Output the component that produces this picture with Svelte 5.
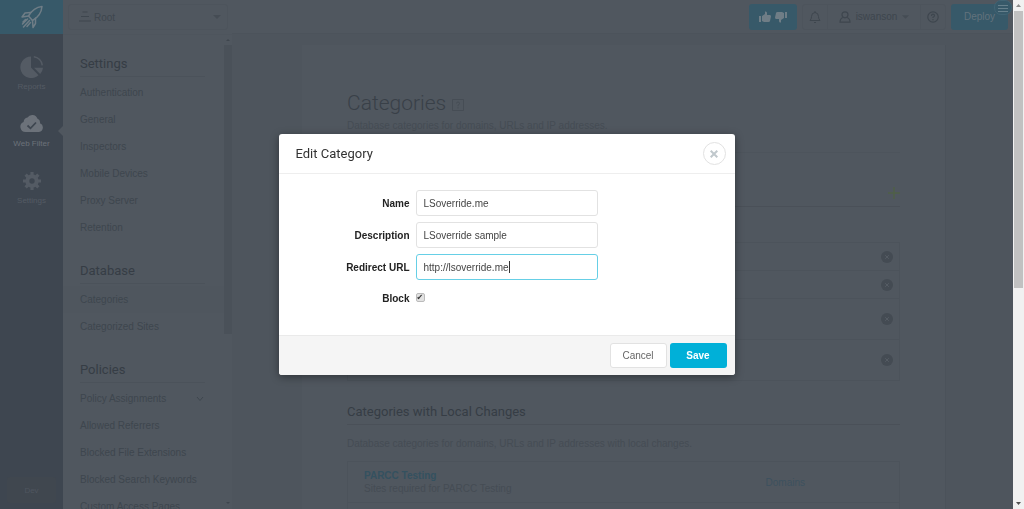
<script>
  import { onMount } from 'svelte';

  let name = 'LSoverride.me';
  let description = 'LSoverride sample';
  let redirectUrl = 'http://lsoverride.me';
  let block = true;
  let urlInput;

  const groups = [
    {
      title: 'Settings',
      items: ['Authentication', 'General', 'Inspectors', 'Mobile Devices', 'Proxy Server', 'Retention']
    },
    { title: 'Database', items: ['Categories', 'Categorized Sites'] },
    {
      title: 'Policies',
      items: [
        'Policy Assignments',
        'Allowed Referrers',
        'Blocked File Extensions',
        'Blocked Search Keywords',
        'Custom Access Pages'
      ]
    }
  ];

  const rows = ['short', 'short', 'tall', 'tall'];

  onMount(() => {
    urlInput.focus();
  });
</script>

<div class="page">
  <nav class="rail">
    <a class="logo" href="#home" aria-label="Home">
      <svg width="24" height="24" viewBox="0 0 24 24" fill="none" stroke="currentColor" stroke-width="1.5" stroke-linejoin="round" stroke-linecap="round">
        <path d="M22 1.500C17 2 12 5 8.500 11L12.500 15.500C18 12.500 21.500 7 22 1.500Z" />
        <path d="M11 7.500L5 8L2 12L8.500 11M15.500 13L15.500 18.500L13 22.500L12.500 15.500" />
        <path d="M7.500 14L2.500 19M9.500 15.500L3.500 22M10.500 17.500L7 21.500M5.500 14.500L3 17" />
      </svg>
    </a>
    <a class="rail-item" href="#reports">
      <svg width="24" height="24" viewBox="0 0 24 24">
        <path fill="currentColor" d="M11 1.500A10.800 10.800 0 1 0 18.500 20.200L11 12.500Z" />
        <path fill="currentColor" d="M14 12.800L23 12.800A10.500 10.500 0 0 1 20.200 19Z" />
        <path fill="none" stroke="currentColor" stroke-width="1.500" d="M13.800 1.800A9.500 9.500 0 0 1 22.300 10.300" />
      </svg>
      <span>Reports</span>
    </a>
    <a class="rail-item active" href="#filter">
      <svg width="24" height="24" viewBox="0 0 24 24">
        <path fill="currentColor" d="M5.500 20A5.200 5.200 0 0 1 3.600 10A5 5 0 0 1 7.500 5.500A5.500 5.500 0 0 1 17.300 6.500A4.300 4.300 0 0 1 20 11.200A4.600 4.600 0 0 1 19 20Z" />
        <path fill="none" stroke="#3e4650" stroke-width="1.800" d="M7.500 13.500L10.500 16.300L16 10.500" />
      </svg>
      <span>Web Filter</span>
    </a>
    <a class="rail-item" href="#settings">
      <svg width="24" height="24" viewBox="0 0 24 24">
        <circle cx="12" cy="12" r="4.700" fill="none" stroke="currentColor" stroke-width="4" />
        <g stroke="currentColor" stroke-width="3.200">
          <path d="M12 3V6M12 18V21M3 12H6M18 12H21M5.600 5.600L8 8M16 16L18.400 18.400M5.600 18.400L8 16M16 8L18.400 5.600" />
        </g>
      </svg>
      <span>Settings</span>
    </a>
    <button class="env">Dev</button>
  </nav>

  <aside class="subnav">
    <div class="subnav-top">
      <button class="group-picker">
        <svg width="12" height="12" viewBox="0 0 12 12" stroke="currentColor" stroke-width="1.200"><path d="M3.500 1H8.500M2 5.500H10M0 10H12" /></svg>
        <span>Root</span>
        <svg class="arrow" width="8" height="4" viewBox="0 0 8 4"><path fill="currentColor" d="M0 0H8L4 4Z" /></svg>
      </button>
    </div>
    <div class="subnav-body">
      <div class="subnav-list">
        {#each groups as group}
          <section>
            <h3>{group.title}</h3>
            <ul>
              {#each group.items as item}
                <li class:current={item === 'Categories'}>
                  <a href="#nav">{item}</a>
                  {#if item === 'Policy Assignments'}
                    <svg width="8" height="6" viewBox="0 0 8 6" fill="none" stroke="currentColor"><path d="M1 1L4 4.500L7 1" /></svg>
                  {/if}
                </li>
              {/each}
            </ul>
          </section>
        {/each}
      </div>
      <div class="track">
        <svg width="8" height="10" viewBox="0 0 8 10"><path fill="currentColor" d="M2 6H6L4 4Z" /></svg>
        <div class="track-thumb"></div>
        <svg class="down" width="8" height="10" viewBox="0 0 8 10"><path fill="currentColor" d="M2 3H6L4 5Z" /></svg>
      </div>
    </div>
  </aside>

  <div class="main">
    <header class="topbar">
      <button class="teal votes" aria-label="Feedback">
        <svg width="12" height="12" viewBox="0 0 12 12" fill="currentColor"><path d="M0 5H2V11H0ZM3 5L6 3V0.500Q8 0 8 2V4H11Q12 4.300 12 5.500L11 10Q10.800 11 9.500 11H5L3 10Z" /></svg>
        <svg width="12" height="12" viewBox="0 0 12 12" fill="currentColor"><path d="M12 7H10V1H12ZM9 7L6 9V11.500Q4 12 4 10V8H1Q0 7.700 0 6.500L1 2Q1.200 1 2.500 1H7L9 2Z" /></svg>
      </button>
      <div class="tools">
        <button class="bell" aria-label="Notifications">
          <svg width="12" height="12" viewBox="0 0 12 12" fill="none" stroke="currentColor"><path d="M1 9.500H11Q9.500 8 9.500 5.500Q9.500 1.800 6 1.500Q2.500 1.800 2.500 5.500Q2.500 8 1 9.500ZM6 0V1.500M5 11.500H7" /></svg>
        </button>
        <button class="user">
          <svg width="12" height="12" viewBox="0 0 12 12" fill="none" stroke="currentColor" stroke-width="1.200"><circle cx="6" cy="3.800" r="3" /><path d="M4 6.500Q1 7.500 1 11.200H11Q11 7.500 8 6.500" /></svg>
          <span>iswanson</span>
          <svg class="caret" width="7" height="4" viewBox="0 0 8 4"><path fill="currentColor" d="M0 0H8L4 4Z" /></svg>
        </button>
        <button class="help" aria-label="Help">
          <svg width="12" height="12" viewBox="0 0 12 12" fill="none" stroke="currentColor" stroke-width="1.200"><circle cx="6" cy="6" r="5.200" /><path d="M4.500 5Q4.500 3.200 6 3.200T7.500 4.700Q7.500 5.500 6 6.200V7M6 8V9.200" /></svg>
        </button>
      </div>
      <button class="teal deploy">Deploy</button>
      <span class="badge">
        <svg width="10" height="8" viewBox="0 0 10 8" stroke="currentColor"><path d="M0 1.500H10M0 4.500H10M0 7.500H10" /></svg>
      </span>
    </header>

    <div class="content">
      <main class="card">
        <h1>
          Categories
          <svg width="12" height="12" viewBox="0 0 12 12" fill="none" stroke="currentColor"><path d="M0.500 0.500H11.500V11.500H0.500ZM4.500 4.500Q4.500 3 6 3T7.500 4.500Q7.500 5.500 6 6.200V7.200M6 8.200V9.500" /></svg>
        </h1>
        <p class="intro">Database categories for domains, URLs and IP addresses.</p>
        <div class="divider"></div>
        <div class="add-row">
          <button aria-label="Add category">
            <svg width="12" height="12" viewBox="0 0 12 12" stroke="currentColor" stroke-width="1.500"><path d="M6 0V12M0 6H12" /></svg>
          </button>
        </div>
        <div class="rows">
          {#each rows as size}
            <div class="row {size}">
              <button aria-label="Remove category">
                <svg width="12" height="12" viewBox="0 0 12 12"><circle cx="6" cy="6" r="6" fill="currentColor" /><path stroke="#555c64" d="M4.200 4.200L7.800 7.800M7.800 4.200L4.200 7.800" /></svg>
              </button>
            </div>
          {/each}
        </div>
        <h2>Categories with Local Changes</h2>
        <p class="local">Database categories for domains, URLs and IP addresses with local changes.</p>
        <div class="rows">
          <div class="row local-row">
            <div>
              <a class="strong" href="#parcc">PARCC Testing</a>
              <p>Sites required for PARCC Testing</p>
            </div>
            <a class="domains" href="#domains">Domains</a>
          </div>
          <div class="row local-row"></div>
        </div>
      </main>
    </div>
  </div>

  <div class="page-scroll">
    <svg width="11" height="11" viewBox="0 0 11 11"><path fill="#8c8c8c" d="M3 7H8L5.500 4Z" /></svg>
    <div class="page-thumb"></div>
    <svg class="down" width="11" height="11" viewBox="0 0 11 11"><path fill="#505050" d="M3 4H8L5.500 7Z" /></svg>
  </div>
</div>

<div class="overlay">
  <form class="modal" role="dialog" aria-labelledby="modal-title" on:submit|preventDefault>
    <div class="modal-header">
      <h4 id="modal-title">Edit Category</h4>
      <button type="button" class="close" aria-label="Close">
        <svg width="8" height="8" viewBox="0 0 8 8" stroke="currentColor" stroke-width="2"><path d="M0.700 0.700L7.300 7.300M7.300 0.700L0.700 7.300" /></svg>
      </button>
    </div>
    <div class="modal-body">
      <label for="name">Name</label>
      <input id="name" type="text" bind:value={name} />
      <label for="description">Description</label>
      <input id="description" type="text" bind:value={description} />
      <label for="url">Redirect URL</label>
      <div class="field">
        <input id="url" class="focused" type="text" bind:value={redirectUrl} bind:this={urlInput} />
        <!-- steady text cursor, placed after a hidden copy of the value -->
        <span class="cursor" aria-hidden="true"><span>{redirectUrl}</span></span>
      </div>
      <label for="block">Block</label>
      <input id="block" type="checkbox" bind:checked={block} />
    </div>
    <div class="modal-footer">
      <button type="button" class="cancel">Cancel</button>
      <button type="submit" class="save">Save</button>
    </div>
  </form>
</div>

<style>
  :global(body) {
    background: #4e555d;
    font-family: 'Liberation Sans', Arial, sans-serif;
    font-size: 10px;
    line-height: 13px;
    color: #3e464e;
    overflow: hidden;
  }

  h1, h2, h3, h4, p, ul {
    margin: 0;
    padding: 0;
    list-style: none;
  }

  h1, h2, h3, h4 {
    font-family: Roboto, sans-serif;
    font-weight: 400;
  }

  a {
    color: inherit;
    text-decoration: none;
  }

  button {
    display: flex;
    align-items: center;
    justify-content: center;
    padding: 0;
    border: none;
    background: none;
    font: inherit;
    color: inherit;
    cursor: pointer;
  }

  svg {
    display: block;
    flex-shrink: 0;
  }

  .page {
    display: flex;
    height: 100vh;
    overflow: hidden;
  }

  /* left icon rail */
  .rail {
    display: flex;
    flex-direction: column;
    flex: 0 0 63px;
    background: #3e4650;
  }

  .logo {
    display: flex;
    align-items: center;
    justify-content: center;
    height: 34px;
    margin-bottom: 21px;
    background: #375969;
    color: #6f7d86;
  }

  .rail-item {
    position: relative;
    display: flex;
    flex-direction: column;
    align-items: center;
    gap: 2px;
    height: 57px;
    font-size: 8px;
    line-height: 12px;
    color: #545b64;
  }

  .rail-item.active {
    color: #6c727a;
  }

  .rail-item.active::after {
    content: '';
    position: absolute;
    right: 0;
    top: 14px;
    border: 5px solid transparent;
    border-left: none;
    border-right-color: #50575f;
  }

  .env {
    height: 26px;
    margin: auto 7px 6px;
    border-radius: 3px;
    background: #40474f;
    font-size: 8px;
    color: #4f565f;
  }

  /* section navigation */
  .subnav {
    display: flex;
    flex-direction: column;
    flex: 0 0 169px;
    background: #50575f;
  }

  .subnav-top {
    box-sizing: border-box;
    flex: 0 0 34px;
    padding: 4px 4px 4px 5px;
    border-bottom: 1px solid #4e555d;
  }

  .group-picker {
    box-sizing: border-box;
    width: 100%;
    height: 26px;
    padding: 0 6px 0 10px;
    gap: 3px;
    border: 1px solid #4d545c;
    border-radius: 3px;
  }

  .arrow {
    margin-left: auto;
    color: #454c54;
  }

  .caret {
    color: #454c54;
  }

  .subnav-body {
    display: flex;
    flex: 1;
    min-height: 0;
  }

  .subnav-list {
    flex: 1;
    padding-top: 18px;
    overflow: hidden;
  }

  section {
    margin-bottom: 19px;
  }

  h3 {
    box-sizing: border-box;
    height: 24px;
    margin: 0 19px 2px 17px;
    border-bottom: 1px solid #4b525a;
    font-size: 13px;
    line-height: 22px;
    color: #363d45;
  }

  li {
    display: flex;
    align-items: center;
    justify-content: space-between;
    height: 27px;
    padding: 0 20px 0 17px;
  }

  li.current {
    background: #4f565e;
  }

  .track {
    display: flex;
    flex-direction: column;
    flex: 0 0 8px;
    color: #3f464e;
  }

  .track-thumb {
    flex: 0 1 61%;
    background: #4a5159;
  }

  .down {
    margin-top: auto;
  }

  /* top bar */
  .main {
    display: flex;
    flex-direction: column;
    flex: 1;
    min-width: 0;
  }

  .topbar {
    position: relative;
    box-sizing: border-box;
    display: flex;
    align-items: center;
    justify-content: flex-end;
    flex: 0 0 34px;
    gap: 5px;
    padding-right: 5px;
    border-bottom: 1px solid #4c535b;
    background: #50575f;
  }

  .teal {
    height: 26px;
    border-radius: 3px;
    background: #375969;
    color: #62727c;
  }

  .votes {
    width: 48px;
    gap: 4px;
    color: #6f7d86;
  }

  .deploy {
    width: 57px;
  }

  .tools {
    display: flex;
    height: 24px;
    border: 1px solid #4d545c;
    border-radius: 3px;
  }

  .bell {
    width: 24px;
  }

  .user {
    width: 94px;
    gap: 5px;
    border: solid #4d545c;
    border-width: 0 1px;
  }

  .help {
    width: 24px;
  }

  .badge {
    position: absolute;
    top: 0;
    right: 1px;
    display: flex;
    align-items: center;
    justify-content: center;
    width: 16px;
    height: 13px;
    border: 1px solid #416474;
    border-radius: 7px;
    background: #375969;
    color: #66808c;
  }

  /* content card */
  .content {
    flex: 1;
    min-height: 0;
    padding: 11px 67px 0 70px;
    overflow: hidden;
  }

  .card {
    padding: 44px 45px;
    border-right: 1px solid #4b525a;
    background: #50575f;
    color: #454c54;
  }

  h1 {
    display: flex;
    align-items: center;
    gap: 6px;
    font-size: 21px;
    font-weight: 300;
    line-height: 28px;
    color: #394048;
  }

  h1 svg {
    margin-top: 3px;
    color: #464d55;
  }

  .intro {
    padding: 2px 0 20px;
  }

  .divider {
    height: 28px;
    border-top: 1px solid #4d545c;
  }

  .add-row {
    display: flex;
    justify-content: flex-end;
    padding-bottom: 7px;
    margin-top: 6px;
    border-bottom: 1px solid #4a5058;
  }

  .add-row button {
    color: #4f6048;
  }

  .rows {
    border: 1px solid #4c535b;
    border-bottom: none;
  }

  .add-row + .rows {
    margin-top: 35px;
  }

  .row {
    box-sizing: border-box;
    display: flex;
    align-items: center;
    justify-content: flex-end;
    height: 41px;
    padding: 0 6px 0 16px;
    border-bottom: 1px solid #4c535b;
  }

  .row button {
    color: #444b53;
  }

  .row.short {
    height: 28px;
  }

  .row.local-row {
    justify-content: space-between;
    padding-right: 94px;
  }

  .strong {
    font-weight: 700;
    color: #34515f;
  }

  .domains {
    color: #3d515e;
  }

  h2 {
    margin-top: 20px;
    padding-bottom: 1px;
    border-bottom: 1px solid #4a5058;
    font-size: 13px;
    line-height: 22px;
    color: #363d45;
  }

  .local {
    padding: 12px 0 11px;
  }

  /* page scrollbar */
  .page-scroll {
    display: flex;
    flex-direction: column;
    align-items: center;
    flex: 0 0 11px;
    background: #f1f1f1;
  }

  .page-thumb {
    width: 9px;
    flex: 0 0 54.5%;
    background: #c1c1c1;
  }

  /* dialog */
  .overlay {
    position: fixed;
    inset: 0 11px 0 0;
    display: flex;
    align-items: center;
    justify-content: center;
  }

  .modal {
    width: 456px;
    border-radius: 3px;
    background: #fff;
    box-shadow: 0 2px 8px rgba(0, 0, 0, 0.4);
    overflow: hidden;
  }

  .modal-header {
    display: flex;
    align-items: center;
    justify-content: space-between;
    height: 39px;
    padding: 0 9px 0 17px;
    border-bottom: 1px solid #eee;
  }

  h4 {
    font-size: 13px;
    line-height: 18px;
    color: #333;
  }

  .close {
    box-sizing: border-box;
    width: 23px;
    height: 23px;
    border: 1px solid #e2e2e2;
    border-radius: 50%;
    color: #c0c8cc;
  }

  .modal-body {
    display: grid;
    grid-template-columns: 131px 182px;
    align-items: center;
    gap: 6px;
    padding: 16px 0 23px;
  }

  label {
    text-align: right;
    font-weight: 700;
    color: #222;
  }

  .field {
    position: relative;
  }

  input[type='text'] {
    display: block;
    box-sizing: border-box;
    width: 100%;
    height: 26px;
    padding: 0 7px;
    border: 1px solid #e2e2e2;
    border-radius: 3px;
    outline: none;
    background: #fff;
    font: inherit;
    color: #444;
    caret-color: transparent;
  }

  input.focused {
    border-color: #66cfe6;
  }

  .cursor {
    position: absolute;
    top: 7px;
    left: 8px;
    height: 12px;
    border-right: 1px solid #333;
    pointer-events: none;
  }

  .cursor span {
    visibility: hidden;
  }

  label[for='block'] {
    line-height: 26px;
  }

  input[type='checkbox'] {
    appearance: none;
    width: 9px;
    height: 9px;
    margin: 0 0 3px;
    border: 1px solid #bbb;
    border-radius: 2px;
    box-sizing: border-box;
    background: #e2e2e2;
  }

  input[type='checkbox']:checked::before {
    content: '✔';
    display: block;
    font: 8px/7px 'DejaVu Sans', sans-serif;
    color: #333;
  }

  .modal-footer {
    display: flex;
    justify-content: flex-end;
    gap: 3px;
    padding: 7px 8px;
    border-top: 1px solid #eaeaea;
    background: #f5f5f5;
  }

  .modal-footer button {
    box-sizing: border-box;
    width: 57px;
    height: 25px;
    border-radius: 3px;
  }

  .cancel {
    border: 1px solid #e2e2e2;
    background: #fff;
    color: #666;
  }

  .save {
    background: #00b0d8;
    font-weight: 700;
    color: #fff;
  }
</style>
